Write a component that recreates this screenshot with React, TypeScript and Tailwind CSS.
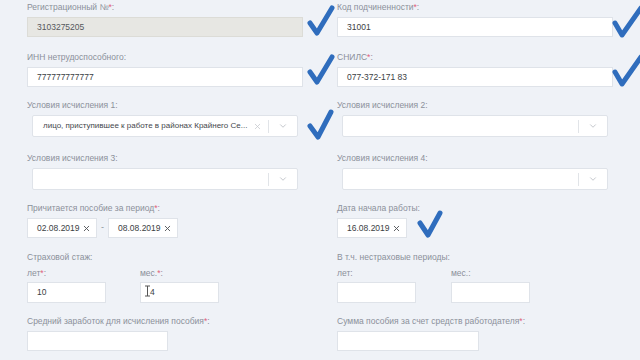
import { ChevronDown, X } from 'lucide-react'

const font = { fontFamily: '"Liberation Sans", Arial, sans-serif' }

function Label({ text, req, className = '' }: { text: string; req?: boolean; className?: string }) {
  return (
    <div className={`text-[8.5px] leading-[12px] text-[#8b909a] ${className}`}>
      {text}
      {req && <span className="text-[#e0607a]">*</span>}:
    </div>
  )
}

function Input({ value, width = 'w-full', disabled }: { value?: string; width?: string; disabled?: boolean }) {
  return (
    <div
      className={`${width} h-[20px] flex items-center pl-[9px] border text-[8.5px] text-[#3b3e44] ${
        disabled ? 'bg-[#e7e7e3] border-[#dcdcd7] text-[#55585c]' : 'bg-white border-[#dfe3e9]'
      }`}
    >
      {value}
    </div>
  )
}

function Select({ value }: { value?: string }) {
  return (
    <div className="mx-[5px] h-[22px] flex items-center bg-white border border-[#dfe3e9] rounded-[2px]">
      <span className="flex-1 min-w-0 pl-[10px] text-[8px] text-[#44474c] whitespace-nowrap">{value}</span>
      {value && <X size={9} className="text-[#c4c7cc] mr-[6px] shrink-0" />}
      <div className="w-px h-[13px] bg-[#e1e4e8] shrink-0" />
      <ChevronDown size={10} className="text-[#b9bdc3] mx-[9px] shrink-0" />
    </div>
  )
}

function DateInput({ value }: { value: string }) {
  return (
    <div className="w-[70px] h-[20px] flex items-center justify-between pl-[9px] pr-[5px] bg-white border border-[#dfe3e9] text-[8.5px] text-[#3b3e44]">
      <span className="whitespace-nowrap">{value}</span>
      <X size={9} strokeWidth={2.5} className="text-[#55585c] shrink-0" />
    </div>
  )
}

const checks = [
  'M310 23 L317 33 L332 8',
  'M310 72 L317 82 L332 57',
  'M615 23 L622 35 L641 8',
  'M615 72 L622 84 L641 57',
  'M310 126 L318 137 L331 112',
  'M420 223 L428 235 L440 213',
]

export default function App() {
  return (
    <div className="relative w-[640px] h-[360px] overflow-hidden bg-[#eff2f7]" style={font}>
      <div className="pl-[27px] pt-[1px]">
        {/* Рег. номер / код */}
        <div className="grid grid-cols-[276px_276px] gap-x-[34px]">
          <div>
            <Label text="Регистрационный №" req className="mb-[4px]" />
            <Input value="3103275205" disabled />
          </div>
          <div>
            <Label text="Код подчиненности" req className="mb-[4px]" />
            <Input value="31001" />
          </div>
        </div>

        <div className="grid grid-cols-[276px_276px] gap-x-[34px] mt-[14px]">
          <div>
            <Label text="ИНН нетрудоспособного" className="mb-[4px]" />
            <Input value="777777777777" />
          </div>
          <div>
            <Label text="СНИЛС" req className="mb-[4px]" />
            <Input value="077-372-171 83" />
          </div>
        </div>

        {/* Условия исчисления */}
        <div className="grid grid-cols-[276px_276px] gap-x-[34px] mt-[12px]">
          <div>
            <Label text="Условия исчисления 1" className="mb-[4px]" />
            <Select value="лицо, приступившее к работе в районах Крайнего Се..." />
          </div>
          <div>
            <Label text="Условия исчисления 2" className="mb-[4px]" />
            <Select />
          </div>
        </div>

        <div className="grid grid-cols-[276px_276px] gap-x-[34px] mt-[15px]">
          <div>
            <Label text="Условия исчисления 3" className="mb-[4px]" />
            <Select />
          </div>
          <div>
            <Label text="Условия исчисления 4" className="mb-[4px]" />
            <Select />
          </div>
        </div>

        {/* Период */}
        <div className="grid grid-cols-[276px_276px] gap-x-[34px] mt-[12px]">
          <div>
            <Label text="Причитается пособие за период" req className="mb-[4px]" />
            <div className="flex items-center gap-[4px]">
              <DateInput value="02.08.2019" />
              <span className="text-[9px] text-[#8b909a]">-</span>
              <DateInput value="08.08.2019" />
            </div>
          </div>
          <div>
            <Label text="Дата начала работы" className="mb-[4px]" />
            <DateInput value="16.08.2019" />
          </div>
        </div>

        {/* Стаж */}
        <div className="grid grid-cols-[276px_276px] gap-x-[34px] mt-[13px]">
          <div>
            <Label text="Страховой стаж" />
            <div className="flex gap-[34px] mt-[4px]">
              <div>
                <Label text="лет" req className="mb-[3px]" />
                <Input value="10" width="w-[79px] h-[21px]" />
              </div>
              <div>
                <Label text="мес." req className="mb-[3px]" />
                <div className="relative">
                  <Input value="4" width="w-[79px] h-[21px]" />
                  <svg className="absolute left-[4px] top-[3px]" width="7" height="12" viewBox="0 0 7 12">
                    <path d="M1 1 H6 M3.5 1 V11 M1 11 H6" stroke="#555" strokeWidth="1" fill="none" />
                  </svg>
                </div>
              </div>
            </div>
          </div>
          <div>
            <Label text="В т.ч. нестраховые периоды" />
            <div className="flex gap-[35px] mt-[4px]">
              <div>
                <Label text="лет" className="mb-[3px]" />
                <Input width="w-[79px] h-[21px]" />
              </div>
              <div>
                <Label text="мес." className="mb-[3px]" />
                <Input width="w-[79px] h-[21px]" />
              </div>
            </div>
          </div>
        </div>

        {/* Суммы */}
        <div className="grid grid-cols-[276px_276px] gap-x-[34px] mt-[12px]">
          <div>
            <Label text="Средний заработок для исчисления пособия" req className="mb-[4px]" />
            <Input width="w-[141px]" />
          </div>
          <div>
            <Label text="Сумма пособия за счет средств работодателя" req className="mb-[4px]" />
            <Input width="w-[142px]" />
          </div>
        </div>
      </div>

      {/* галочки поверх формы */}
      <svg className="absolute inset-0 pointer-events-none" width="640" height="360" viewBox="0 0 640 360">
        {checks.map((d) => (
          <path key={d} d={d} stroke="#2f6dbd" strokeWidth="5" strokeLinecap="round" strokeLinejoin="round" fill="none" />
        ))}
      </svg>
    </div>
  )
}
